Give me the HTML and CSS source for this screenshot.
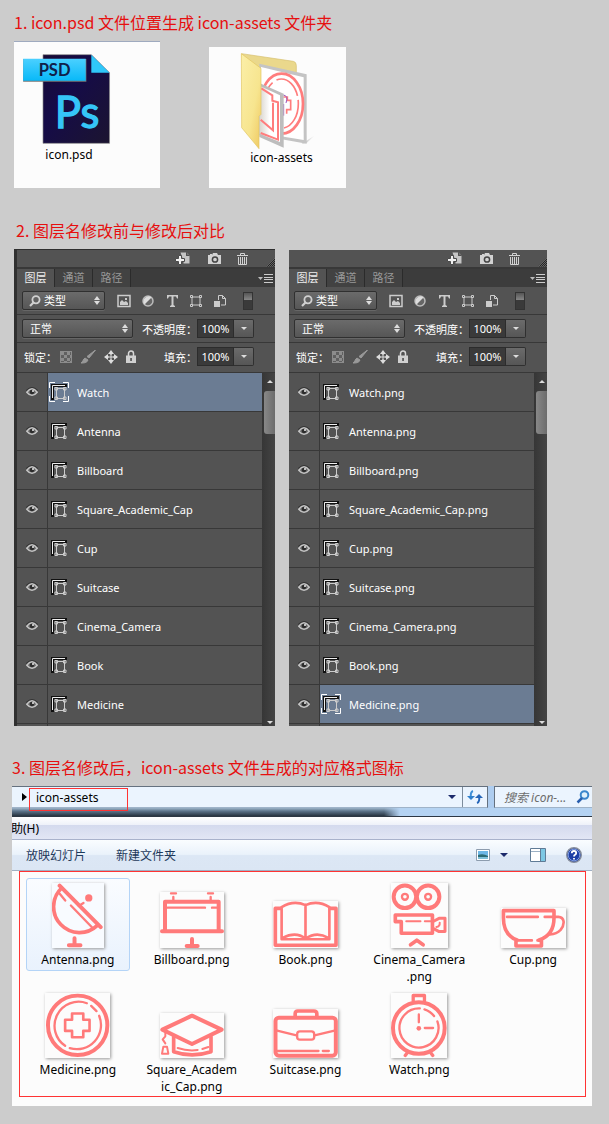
FILE: index.html
```html
<!DOCTYPE html>
<html lang="zh-CN">
<head>
<meta charset="utf-8">
<meta name="viewport" content="width=device-width, initial-scale=1">
<title>icon-assets</title>
<link rel="stylesheet" href="styles.css">
</head>
<body>
<svg class="sprite" aria-hidden="true">
  <symbol id="i-new" viewBox="0 0 15 13"><path d="M5.500 .5h6l3 3V11.500h-6V9" fill="#c4c4c4"/><path d="M11 0v4h4z" fill="#555"/><path d="M12 .5l2.500 2.500H12zM3.500 3.500h3v3h3v3h-3v3h-3v-3h-3v-3h3z" fill="#eee" stroke="#4a4a4a"/></symbol>
  <symbol id="i-camera" viewBox="0 0 15 13"><path d="M1 3h2V2h2v1l1-2h4l1 2h3v9H1z" fill="#d2d2d2"/><circle cx="8" cy="7.500" r="2.600" fill="none" stroke="#444" stroke-width="1.500"/></symbol>
  <symbol id="i-trash" viewBox="0 0 13 13"><path d="M1 3.500h11M4.500 3V1.500h4V3M2.500 5v7.500h8V5M4.500 5v7M6.500 5v7M8.500 5v7" fill="none" stroke="#d2d2d2"/></symbol>
  <symbol id="i-menu" viewBox="0 0 15 9"><path d="M0 3h5L2.500 6z" fill="#bbb"/><path d="M6 .5h9M6 3.500h9M6 5.500h9M6 8.500h9" stroke="#ccc"/></symbol>
  <symbol id="i-updown" viewBox="0 0 6 9"><path d="M0 4l3-4 3 4zM0 5h6L3 9z" fill="#ddd"/></symbol>
  <symbol id="i-search" viewBox="0 0 12 12"><circle cx="7" cy="4.800" r="3.600" fill="none" stroke="#d0d0d0" stroke-width="1.800"/><path d="M4.500 7.500L1 11" stroke="#d0d0d0" stroke-width="2.200"/></symbol>
  <symbol id="i-image" viewBox="0 0 14 14"><path d="M1 1.500h12v11H1z" fill="none" stroke="#ccc" stroke-width="1.500"/><path d="M3 11V8l2-2 2 2 2-1 2 2v2zM8 4h2v2H8z" fill="#ccc"/></symbol>
  <symbol id="i-adjust" viewBox="0 0 14 14"><circle cx="7" cy="7" r="5" fill="#666" stroke="#bbb" stroke-width="1.500"/><path d="M10.500 3.500a5 5 0 0 0-7 7z" fill="#ddd"/></symbol>
  <symbol id="i-type" viewBox="0 0 14 14"><path d="M2 1h11v3.500h-1L11 2.500H8.500V11l1.500 1v1H5v-1l1.500-1V2.500H4L3 4.500H2z" fill="#ccc"/></symbol>
  <symbol id="i-shape" viewBox="0 0 14 14"><path d="M3 3h8v8H3zM1.500 1.500h2v2h-2zM10.500 1.500h2v2h-2zM1.500 10.500h2v2h-2zM10.500 10.500h2v2h-2z" fill="none" stroke="#ccc"/></symbol>
  <symbol id="i-smart" viewBox="0 0 14 14"><path d="M5.500 6V1.500h4l3 3V11H8M9.500 1.500v3h3" fill="none" stroke="#ccc"/><path d="M1 7h6v6H1z" fill="#ccc"/></symbol>
  <symbol id="i-checker" viewBox="0 0 12 12"><path d="M0 0h12v12H0z" fill="#8c8c8c"/><path d="M4 1h3v3H4zM1 4h3v3H1zM7 4h3v3H7zM4 7h3v3H4zM10 1h1v3h-1zM10 7h1v3h-1zM1 10h3v1H1zM7 10h3v1H7z" fill="#606060"/></symbol>
  <symbol id="i-brush" viewBox="0 0 16 14"><path d="M15.500 0L9 8 7 6.500zM1 13c2-1 2-4 4-5l3 2c-1 3-4 3-7 3z" fill="#999" stroke="#999"/></symbol>
  <symbol id="i-move" viewBox="0 0 14 14"><path d="M7 2v10M2 7h10" stroke="#ddd"/><path d="M4 4L7 0l3 4zM4 10l3 4 3-4zM4 4L0 7l4 3zM10 4l4 3-4 3z" fill="#ddd"/><path d="M5 5h4v4H5z" fill="#555"/><path d="M7 4v6M4 7h6" stroke="#ddd"/></symbol>
  <symbol id="i-lock" viewBox="0 0 10 13"><path d="M2.500 6V3.500a2.500 2.500 0 0 1 5 0V6" fill="none" stroke="#d8d8d8" stroke-width="1.500"/><path d="M0 5.500h10V13H0z" fill="#d0d0d0"/><path d="M4.300 8h1.500v3H4.300z" fill="#444"/></symbol>
  <symbol id="i-eye" viewBox="0 0 12 10"><path d="M0 3.500Q6-2.500 12 3.500" fill="none" stroke="#333"/><path d="M.8 5.200Q6-1.500 11.200 5.200 6 11.500.8 5.200z" fill="#666" stroke="#c4c4c4" stroke-width="1.500"/><circle cx="6" cy="5" r="2.200" fill="#2c2c2c"/><circle cx="7" cy="4" r="1" fill="#eee"/></symbol>
  <symbol id="i-layer" viewBox="0 0 20 20"><path d="M2 18V2h16v3H5v13z" fill="#111"/><path d="M3.500 16V3.500H16" fill="none" stroke="#eee"/><path d="M7.500 6.500h8v10h-8zM6 5.500h2.500V8H6zM14.500 5.500H17V8h-2.500zM6 15h2.500v2.500H6zM14.500 15H17v2.500h-2.500z" fill="none" stroke="#ccc"/></symbol>
  <symbol id="i-frame" viewBox="0 0 20 20"><path d="M.5 6V.5H6M14 .5h5.500V6M.5 14v5.500H6M14 19.500h5.500V14" fill="none" stroke="#fff"/></symbol>
</svg>

<main class="page">
  <section class="step">
    <h2 class="step-title">1. icon.psd 文件位置生成 icon-assets 文件夹</h2>
    <div class="cards">
      <figure class="card card-psd">
        <svg class="psd-icon" viewBox="66 155 268 278" role="img" aria-label="PSD">
          <defs>
            <linearGradient id="tag" x2="0" y2="1"><stop stop-color="#4bd0ff"/><stop offset="1" stop-color="#08b9f8"/></linearGradient>
            <linearGradient id="doc" x2="1" y2="1"><stop stop-color="#180b35"/><stop offset=".4" stop-color="#150b48"/><stop offset="1" stop-color="#1c1530"/></linearGradient>
          </defs>
          <path d="M129 160H275L330 215V428H129z" fill="url(#doc)" stroke="#888" stroke-width="2"/>
          <path d="M275 160L330 215H275z" fill="#2fc7fa"/>
          <path d="M69 173H260V242H69z" fill="#777"/>
          <path d="M69 172H258V239H69z" fill="url(#tag)"/>
          <text x="164" y="225" class="psd-tag">PSD</text>
          <text x="232" y="382" class="psd-mark">Ps</text>
        </svg>
        <figcaption>icon.psd</figcaption>
      </figure>
      <figure class="card card-folder">
        <svg class="folder-icon" viewBox="720 155 231 294" role="img" aria-label="icon-assets">
          <defs>
            <linearGradient id="fold" x2="1" y2="1"><stop stop-color="#fbefa8"/><stop offset=".6" stop-color="#f7e58f"/><stop offset="1" stop-color="#efc860"/></linearGradient>
            <linearGradient id="paper"><stop stop-color="#d8d4cc"/><stop offset=".5" stop-color="#fff"/></linearGradient>
            <linearGradient id="shade"><stop stop-color="#bbb"/><stop offset="1" stop-color="#fcfcfc"/></linearGradient>
          </defs>
          <path d="M905 430L945 405 920 428z" fill="url(#shade)"/>
          <path d="M725 160L880 183Q889 185 889 196V330H740z" fill="#ead88c" stroke="#d6c070" stroke-width="2"/>
          <path d="M778 190L920 222V430L778 405z" fill="#c4c4c4"/>
          <path d="M783 200L911 231V419L783 398z" fill="#fff"/>
          <g fill="none" stroke="#ff7d7d">
            <ellipse cx="845" cy="310" rx="64" ry="90" stroke-width="8"/>
            <ellipse cx="844" cy="310" rx="51" ry="74" stroke-width="5" stroke-dasharray="90 12 24 14"/>
            <path d="M850 290h12v10h10v28h-12v12" stroke-width="5"/>
          </g>
          <path d="M850 284q16 2 8 24M851 346v-35" stroke="#9b55c0" stroke-width="3" fill="none"/>
          <path d="M778 248L851 280V442L778 410z" fill="#bdbdbd"/>
          <path d="M778 256L840 285V425L778 400z" fill="url(#paper)"/>
          <path d="M784 264l33 21v16l17 5v112l-52-20M782 358l37 32V307" fill="none" stroke="#ff7d7d" stroke-width="6"/>
          <path d="M724 160L783 204V342L777 348V445L725 382z" fill="url(#fold)" stroke="#e3c660" stroke-width="2"/>
        </svg>
        <figcaption>icon-assets</figcaption>
      </figure>
    </div>
  </section>

  <section class="step">
    <h2 class="step-title title-two">2. 图层名修改前与修改后对比</h2>
    <div class="panels">
      <div class="panel panel-before">
        <div class="panel-top">
          <button class="bare" aria-label="新建"><svg width="15" height="13"><use href="#i-new"/></svg></button>
          <button class="bare" aria-label="快照"><svg width="15" height="13"><use href="#i-camera"/></svg></button>
          <button class="bare" aria-label="删除"><svg width="13" height="13"><use href="#i-trash"/></svg></button>
          <span class="grip"></span>
        </div>
        <div class="tabs">
          <button class="tab active">图层</button><button class="tab">通道</button><button class="tab">路径</button>
          <button class="bare tabs-menu" aria-label="菜单"><svg width="15" height="9"><use href="#i-menu"/></svg></button>
        </div>
        <div class="row">
          <label class="picker picker-kind"><svg class="lens" width="12" height="12"><use href="#i-search"/></svg><select aria-label="类型"><option>类型</option></select><svg class="updown" width="6" height="9"><use href="#i-updown"/></svg></label>
          <div class="filters">
            <button class="bare" aria-label="像素"><svg width="14" height="14"><use href="#i-image"/></svg></button>
            <button class="bare" aria-label="调整"><svg width="14" height="14"><use href="#i-adjust"/></svg></button>
            <button class="bare" aria-label="文字"><svg width="14" height="14"><use href="#i-type"/></svg></button>
            <button class="bare" aria-label="形状"><svg width="14" height="14"><use href="#i-shape"/></svg></button>
            <button class="bare" aria-label="智能对象"><svg width="14" height="14"><use href="#i-smart"/></svg></button>
          </div>
          <button class="switch" aria-label="过滤开关"></button>
        </div>
        <div class="row">
          <label class="picker picker-blend"><select aria-label="混合模式"><option>正常</option></select><svg class="updown" width="6" height="9"><use href="#i-updown"/></svg></label>
          <label class="value-label" for="op1">不透明度：</label>
          <input class="value" id="op1" value="100%"><button class="drop" aria-label="不透明度选项"></button>
        </div>
        <div class="row row-lock">
          <span class="lock-label">锁定：</span>
          <div class="locks">
            <button class="bare" aria-label="透明像素"><svg width="12" height="12"><use href="#i-checker"/></svg></button>
            <button class="bare" aria-label="图像像素"><svg width="16" height="14"><use href="#i-brush"/></svg></button>
            <button class="bare" aria-label="位置"><svg width="14" height="14"><use href="#i-move"/></svg></button>
            <button class="bare" aria-label="全部"><svg width="10" height="13"><use href="#i-lock"/></svg></button>
          </div>
          <label class="value-label" for="fill1">填充：</label>
          <input class="value" id="fill1" value="100%"><button class="drop" aria-label="填充选项"></button>
        </div>
        <div class="layers">
          <ul class="layer-list">
            <li class="layer selected"><button class="eye" aria-label="可见"><svg width="12" height="10"><use href="#i-eye"/></svg></button><span class="layer-body"><svg width="20" height="20"><use href="#i-layer"/><use href="#i-frame"/></svg>Watch</span></li>
            <li class="layer"><button class="eye" aria-label="可见"><svg width="12" height="10"><use href="#i-eye"/></svg></button><span class="layer-body"><svg width="20" height="20"><use href="#i-layer"/></svg>Antenna</span></li>
            <li class="layer"><button class="eye" aria-label="可见"><svg width="12" height="10"><use href="#i-eye"/></svg></button><span class="layer-body"><svg width="20" height="20"><use href="#i-layer"/></svg>Billboard</span></li>
            <li class="layer"><button class="eye" aria-label="可见"><svg width="12" height="10"><use href="#i-eye"/></svg></button><span class="layer-body"><svg width="20" height="20"><use href="#i-layer"/></svg>Square_Academic_Cap</span></li>
            <li class="layer"><button class="eye" aria-label="可见"><svg width="12" height="10"><use href="#i-eye"/></svg></button><span class="layer-body"><svg width="20" height="20"><use href="#i-layer"/></svg>Cup</span></li>
            <li class="layer"><button class="eye" aria-label="可见"><svg width="12" height="10"><use href="#i-eye"/></svg></button><span class="layer-body"><svg width="20" height="20"><use href="#i-layer"/></svg>Suitcase</span></li>
            <li class="layer"><button class="eye" aria-label="可见"><svg width="12" height="10"><use href="#i-eye"/></svg></button><span class="layer-body"><svg width="20" height="20"><use href="#i-layer"/></svg>Cinema_Camera</span></li>
            <li class="layer"><button class="eye" aria-label="可见"><svg width="12" height="10"><use href="#i-eye"/></svg></button><span class="layer-body"><svg width="20" height="20"><use href="#i-layer"/></svg>Book</span></li>
            <li class="layer"><button class="eye" aria-label="可见"><svg width="12" height="10"><use href="#i-eye"/></svg></button><span class="layer-body"><svg width="20" height="20"><use href="#i-layer"/></svg>Medicine</span></li>
          </ul>
          <div class="scroll"><span class="arrow-up"></span><span class="thumb"></span><span class="arrow-down"></span></div>
        </div>
      </div>

      <div class="panel panel-after">
        <div class="panel-top">
          <button class="bare" aria-label="新建"><svg width="15" height="13"><use href="#i-new"/></svg></button>
          <button class="bare" aria-label="快照"><svg width="15" height="13"><use href="#i-camera"/></svg></button>
          <button class="bare" aria-label="删除"><svg width="13" height="13"><use href="#i-trash"/></svg></button>
          <span class="grip"></span>
        </div>
        <div class="tabs">
          <button class="tab active">图层</button><button class="tab">通道</button><button class="tab">路径</button>
          <button class="bare tabs-menu" aria-label="菜单"><svg width="15" height="9"><use href="#i-menu"/></svg></button>
        </div>
        <div class="row">
          <label class="picker picker-kind"><svg class="lens" width="12" height="12"><use href="#i-search"/></svg><select aria-label="类型"><option>类型</option></select><svg class="updown" width="6" height="9"><use href="#i-updown"/></svg></label>
          <div class="filters">
            <button class="bare" aria-label="像素"><svg width="14" height="14"><use href="#i-image"/></svg></button>
            <button class="bare" aria-label="调整"><svg width="14" height="14"><use href="#i-adjust"/></svg></button>
            <button class="bare" aria-label="文字"><svg width="14" height="14"><use href="#i-type"/></svg></button>
            <button class="bare" aria-label="形状"><svg width="14" height="14"><use href="#i-shape"/></svg></button>
            <button class="bare" aria-label="智能对象"><svg width="14" height="14"><use href="#i-smart"/></svg></button>
          </div>
          <button class="switch" aria-label="过滤开关"></button>
        </div>
        <div class="row">
          <label class="picker picker-blend"><select aria-label="混合模式"><option>正常</option></select><svg class="updown" width="6" height="9"><use href="#i-updown"/></svg></label>
          <label class="value-label" for="op2">不透明度：</label>
          <input class="value" id="op2" value="100%"><button class="drop" aria-label="不透明度选项"></button>
        </div>
        <div class="row row-lock">
          <span class="lock-label">锁定：</span>
          <div class="locks">
            <button class="bare" aria-label="透明像素"><svg width="12" height="12"><use href="#i-checker"/></svg></button>
            <button class="bare" aria-label="图像像素"><svg width="16" height="14"><use href="#i-brush"/></svg></button>
            <button class="bare" aria-label="位置"><svg width="14" height="14"><use href="#i-move"/></svg></button>
            <button class="bare" aria-label="全部"><svg width="10" height="13"><use href="#i-lock"/></svg></button>
          </div>
          <label class="value-label" for="fill2">填充：</label>
          <input class="value" id="fill2" value="100%"><button class="drop" aria-label="填充选项"></button>
        </div>
        <div class="layers">
          <ul class="layer-list">
            <li class="layer"><button class="eye" aria-label="可见"><svg width="12" height="10"><use href="#i-eye"/></svg></button><span class="layer-body"><svg width="20" height="20"><use href="#i-layer"/></svg>Watch.png</span></li>
            <li class="layer"><button class="eye" aria-label="可见"><svg width="12" height="10"><use href="#i-eye"/></svg></button><span class="layer-body"><svg width="20" height="20"><use href="#i-layer"/></svg>Antenna.png</span></li>
            <li class="layer"><button class="eye" aria-label="可见"><svg width="12" height="10"><use href="#i-eye"/></svg></button><span class="layer-body"><svg width="20" height="20"><use href="#i-layer"/></svg>Billboard.png</span></li>
            <li class="layer"><button class="eye" aria-label="可见"><svg width="12" height="10"><use href="#i-eye"/></svg></button><span class="layer-body"><svg width="20" height="20"><use href="#i-layer"/></svg>Square_Academic_Cap.png</span></li>
            <li class="layer"><button class="eye" aria-label="可见"><svg width="12" height="10"><use href="#i-eye"/></svg></button><span class="layer-body"><svg width="20" height="20"><use href="#i-layer"/></svg>Cup.png</span></li>
            <li class="layer"><button class="eye" aria-label="可见"><svg width="12" height="10"><use href="#i-eye"/></svg></button><span class="layer-body"><svg width="20" height="20"><use href="#i-layer"/></svg>Suitcase.png</span></li>
            <li class="layer"><button class="eye" aria-label="可见"><svg width="12" height="10"><use href="#i-eye"/></svg></button><span class="layer-body"><svg width="20" height="20"><use href="#i-layer"/></svg>Cinema_Camera.png</span></li>
            <li class="layer"><button class="eye" aria-label="可见"><svg width="12" height="10"><use href="#i-eye"/></svg></button><span class="layer-body"><svg width="20" height="20"><use href="#i-layer"/></svg>Book.png</span></li>
            <li class="layer selected"><button class="eye" aria-label="可见"><svg width="12" height="10"><use href="#i-eye"/></svg></button><span class="layer-body"><svg width="20" height="20"><use href="#i-layer"/><use href="#i-frame"/></svg>Medicine.png</span></li>
          </ul>
          <div class="scroll"><span class="arrow-up"></span><span class="thumb"></span><span class="arrow-down"></span></div>
        </div>
      </div>
    </div>
  </section>

  <section class="step">
    <h2 class="step-title title-three">3. 图层名修改后，icon-assets 文件生成的对应格式图标</h2>
    <div class="explorer">
      <div class="location">
        <div class="address">
          <span class="crumb-arrow"></span>
          <button class="crumb">icon-assets</button>
          <button class="bare history" aria-label="历史"><span class="caret"></span></button>
          <button class="refresh" aria-label="刷新"><svg width="16" height="14" viewBox="0 0 16 14"><path d="M6 1Q3 2 4 8" fill="none" stroke="#3e8fd6" stroke-width="2"/><path d="M0 6h8L4 10z" fill="#2f7fcc"/><path d="M10 13Q13 12 12 6" fill="none" stroke="#2565b8" stroke-width="2"/><path d="M8 8h8l-4-4z" fill="#2565b8"/></svg></button>
        </div>
        <label class="search"><input type="text" aria-label="搜索" placeholder="搜索 icon-..."><svg width="14" height="14" viewBox="0 0 14 14"><circle cx="8.500" cy="5" r="3.800" fill="#dff0fb" stroke="#3a86cc" stroke-width="2"/><path d="M6 8L1.500 12.500" stroke="#2a5fae" stroke-width="2.500"/></svg></label>
      </div>
      <div class="glass"></div>
      <div class="menubar"><button class="bare menu-item">助(H)</button></div>
      <div class="toolbar">
        <button class="bare">放映幻灯片</button>
        <button class="bare">新建文件夹</button>
        <span class="tools">
          <button class="bare" aria-label="视图"><svg width="14" height="12" viewBox="0 0 14 12"><path d="M.5.5h13v11H.5z" fill="#fff" stroke="#8d9cae"/><path d="M2 2h10v8H2z" fill="#6db7e6"/><path d="M2 6q5-2 10 1v3H2z" fill="#2c6b74"/><path d="M2 8h10v2H2z" fill="#7fc0d8"/></svg></button>
          <button class="bare" aria-label="更多视图"><span class="caret"></span></button>
          <button class="bare pane" aria-label="预览窗格"><svg width="16" height="14" viewBox="0 0 16 14"><path d="M.5.5h15v13H.5z" fill="#fff" stroke="#5f7b96"/><path d="M1 3.500h9" stroke="#9bb0c4"/><path d="M10 1h5v12h-5z" fill="#7cc7e4"/><path d="M10.500 1v12" stroke="#5f7b96"/></svg></button>
          <button class="bare" aria-label="帮助"><svg width="16" height="16" viewBox="0 0 16 16"><circle cx="8" cy="8" r="7.300" fill="#1d3fa6" stroke="#878e9c" stroke-width="1.400"/><circle cx="8" cy="8" r="5.800" fill="none" stroke="#7d9be0"/><path d="M5.800 6.200Q5.800 4 8 4t2.200 2Q10.200 7 9 7.800 8 8.400 8 9.600M8 11v1.500" fill="none" stroke="#fff" stroke-width="1.800"/></svg></button>
        </span>
      </div>
      <div class="content">
        <div class="files">
          <figure class="file chosen"><div class="slot"><svg class="pic" width="52" height="65" viewBox="123 38 157 194">
            <path d="M146 45L270 170M191 204V224M174 225H209" stroke-width="12"/><path d="M152 52A77 77 0 0 0 260 165" stroke-width="11"/><path d="M145 68L163 90M180 105L245 172M204 106L218 97" stroke-width="7"/><circle class="dot" cx="234" cy="82" r="11"/></svg></div><figcaption>Antenna.png</figcaption></figure>
          <figure class="file"><div class="slot"><svg class="pic" width="64" height="56" viewBox="447 63 192 168">
            <path d="M462 180V92H623V180M453 181H633M543 204V224M527 225H560" stroke-width="12"/><path d="M470 110H582M603 110H620M487 78V90M599 78V90M480 67H495M591 67H606" stroke-width="7"/></svg></div><figcaption>Billboard.png</figcaption></figure>
          <figure class="file"><div class="slot"><svg class="pic" width="65" height="47" viewBox="66 90 196 141">
            <path d="M88 112H73V223H256V112H238" stroke-width="11"/><path d="M92 108V205H236V108Q200 86 164 102 128 86 92 108M164 102V200M95 201Q135 180 164 203 198 180 233 201" stroke-width="8"/></svg></div><figcaption>Book.png</figcaption></figure>
          <figure class="file"><div class="slot"><svg class="pic" width="57" height="65" viewBox="420 36 172 195">
            <circle cx="462" cy="77" r="34" stroke-width="12"/><circle cx="532" cy="77" r="34" stroke-width="12"/><circle cx="462" cy="77" r="9" stroke-width="7"/><circle cx="532" cy="77" r="9" stroke-width="7"/><path d="M433 132H545V187H451V152H433zM479 222L498 208 517 222" stroke-width="11"/><path d="M550 150L565 142H583V182H565L550 174" stroke-width="9"/><path d="M466 151H509M522 151H540M557 168Q568 167 567 155" stroke-width="6"/></svg></div><figcaption>Cinema_Camera<br>.png</figcaption></figure>
          <figure class="file"><div class="slot"><svg class="pic" width="65" height="40" viewBox="93 110 194 121">
            <path d="M140 207C112 196 99 175 99 140V118H252V140C252 175 239 196 207 207M137 207V225H214V207" stroke-width="11"/><path d="M110 137H203M224 137H265C284 138 286 158 272 176Q260 188 240 190M140 208H185M202 208H212" stroke-width="8"/></svg></div><figcaption>Cup.png</figcaption></figure>
          <figure class="file"><div class="slot"><svg class="pic" width="65" height="65" viewBox="101 369 197 195">
            <circle cx="200" cy="466" r="90" stroke-width="12"/><path d="M228 399A73 73 0 0 0 162 528M265 437A73 73 0 0 1 176 535M241 407L257 423" stroke-width="7"/><path d="M183 430H217V449H236V483H217V502H183V483H162V449H183z" stroke-width="8"/></svg></div><figcaption>Medicine.png</figcaption></figure>
          <figure class="file"><div class="slot"><svg class="pic" width="64" height="45" viewBox="447 429 192 135">
            <path d="M454 479L543 437 632 479 543 522z" stroke-width="12"/><path d="M488 500V545Q543 564 600 545V500" stroke-width="11"/><path d="M500 534Q530 544 560 540M574 537L592 531M463 488V499L455 508 463 520M457 530H468L472 551H453z" stroke-width="6"/></svg></div><figcaption>Square_Academ<br>ic_Cap.png</figcaption></figure>
          <figure class="file"><div class="slot"><svg class="pic" width="65" height="49" viewBox="68 417 194 147">
            <rect x="75" y="443" width="181" height="114" rx="10" stroke-width="12"/><path d="M134 440V431Q134 423 142 423H190Q199 423 199 431V440" stroke-width="11"/><path d="M80 482L138 496M192 496L252 482M80 543H204M217 543H235" stroke-width="7"/><rect x="140" y="484" width="51" height="25" rx="8" stroke-width="7"/></svg></div><figcaption>Suitcase.png</figcaption></figure>
          <figure class="file"><div class="slot"><svg class="pic" width="56" height="65" viewBox="423 369 169 195">
            <circle cx="507" cy="474" r="78" stroke-width="12"/><path d="M490 392V376H524V392M471 550L466 557M544 550L549 557" stroke-width="10"/><path d="M510 415A59 59 0 1 0 563 454M524 418A59 59 0 0 1 553 438M507 433V457M525 474H550" stroke-width="7"/><circle class="dot" cx="507" cy="475" r="7"/></svg></div><figcaption>Watch.png</figcaption></figure>
        </div>
      </div>
    </div>
  </section>
</main>
</body>
</html>
```
FILE: styles.css
```css
* { box-sizing: border-box; }

body {
  margin: 0;
  background: #ccc;
  color: #000;
  font-family: "Noto Sans", "Noto Sans CJK SC", sans-serif;
  font-size: 12px;
}

button, input, select { font: inherit; color: inherit; }
svg { display: block; flex: none; }
figure, ul { margin: 0; padding: 0; }
.sprite { position: absolute; width: 0; height: 0; }

.bare {
  display: flex;
  padding: 0;
  border: 0;
  background: none;
}

.page { padding: 10px 17px 18px 12px; }

.step-title {
  margin: 0 0 0 2px;
  color: #e60f0f;
  font-family: "Noto Sans CJK SC", sans-serif;
  font-size: 16px;
  font-weight: 400;
  line-height: 24px;
}

/* File cards */
.cards {
  display: flex;
  align-items: flex-end;
  gap: 49px;
  margin: 7px 2px 0;
}
.card {
  display: flex;
  flex-direction: column;
  background: #fcfcfc;
  text-align: center;
  line-height: 16px;
}
.card-psd {
  width: 146px;
  border-top: 1px solid #9faabf;
  padding: 11px 8px 25px;
}
.card-psd figcaption { width: 94px; margin-top: 2px; }
.card-folder {
  width: 137px;
  padding: 5px 0 22px;
}
.card-folder figcaption { margin-left: 8px; }
.psd-icon { width: 89px; height: 92px; }
.folder-icon { width: 77px; height: 98px; margin-left: 31px; }
.psd-tag, .psd-mark { font-family: Lato, sans-serif; text-anchor: middle; }
.psd-tag { font-size: 50px; font-weight: 700; fill: #10204a; }
.psd-mark {
  font-size: 132px;
  font-weight: 400;
  fill: #35c5f8;
  stroke: #35c5f8;
  stroke-width: 4px;
}

/* Layer panels */
.title-two { margin: 30px 0 0 4px; }
.panels {
  display: flex;
  align-items: flex-end;
  gap: 14px;
  margin: 7px 2px 0;
}
.panel {
  width: 258px;
  background: #535353;
  color: #fff;
  font-size: 11px;
}
.panel-before {
  width: 261px;
  border-top: 1px solid #2e2e2e;
  border-left: 3px solid #303030;
}
.panel-top {
  display: flex;
  align-items: center;
  height: 19px;
  padding-left: 158px;
  gap: 17px;
  border-bottom: 2px solid #383838;
}
.panel-top .bare:nth-child(3) { margin-left: -3px; }
.grip {
  width: 9px;
  height: 9px;
  margin: 7px 0 0 auto;
  background: repeating-conic-gradient(#222 0 25%, #666 0 50%) 0 0 / 2px 2px;
  clip-path: polygon(100% 0, 100% 100%, 0 100%);
}
.tabs {
  display: flex;
  align-items: center;
  height: 18px;
  background: #3c3c3c;
}
.tab {
  width: 38px;
  height: 18px;
  padding: 0;
  border: 0;
  border-right: 1px solid #2b2b2b;
  background: #424242;
  color: #999;
  line-height: 18px;
}
.tab.active { background: #535353; color: #eee; }
.tabs-menu { margin: 0 2px 0 auto; }

.row {
  display: flex;
  align-items: center;
  height: 28px;
  padding-left: 5px;
  border-bottom: 1px solid #383838;
}
.row-lock { height: 30px; padding-bottom: 2px; }
.picker {
  display: flex;
  align-items: center;
  height: 19px;
  padding: 0 4px 0 7px;
  border: 1px solid #303030;
  border-radius: 2px;
  background: linear-gradient(#6b6b6b, #565656);
  box-shadow: 0 1px #666;
}
.picker select {
  flex: 1;
  min-width: 0;
  padding: 0;
  border: 0;
  appearance: none;
  background: none;
  outline: 0;
}
.picker-kind { width: 83px; gap: 3px; padding-left: 6px; }
.picker-blend { width: 111px; }
.filters { display: flex; gap: 10px; margin-left: 12px; }
.switch {
  width: 10px;
  height: 18px;
  margin-left: 16px;
  padding: 0;
  border: 1px solid #333;
  background: linear-gradient(#555, #888 45%, #3a3a3a 45%);
}
.value-label { margin-left: auto; white-space: nowrap; }
.value {
  width: 37px;
  height: 19px;
  padding: 0;
  border: 1px solid #2c2c2c;
  background: #3a3a3a;
  text-align: center;
}
.drop {
  display: grid;
  place-items: center;
  width: 20px;
  height: 19px;
  margin-right: 21px;
  padding: 0;
  border: 1px solid #303030;
  border-left: 0;
  border-radius: 0 2px 2px 0;
  background: linear-gradient(#6b6b6b, #565656);
}
.drop::before {
  content: "";
  border: 3px solid transparent;
  border-top-color: #ddd;
  border-bottom: 0;
}
.lock-label { margin-left: 2px; width: 36px; white-space: nowrap; }
.locks { display: flex; align-items: center; gap: 8px; }

.layers { display: flex; }
.layer-list {
  flex: 1;
  min-width: 0;
  padding-bottom: 2px;
  list-style: none;
  background: linear-gradient(to right, #535353 30px, #383838 30px, #383838 31px, #535353 31px);
}
.layer {
  display: flex;
  height: 39px;
  border-bottom: 1px solid #383838;
}
.eye {
  display: grid;
  place-items: center;
  width: 31px;
  padding: 0;
  border: 0;
  border-right: 1px solid #383838;
  background: none;
}
.layer-body {
  display: flex;
  flex: 1;
  align-items: center;
  gap: 8px;
  padding-left: 1px;
}
.selected .layer-body { background: #6b7c93; }
.scroll {
  display: flex;
  flex-direction: column;
  align-items: flex-end;
  width: 13px;
  padding: 7px 0 2px;
  background: linear-gradient(to right, #363636, #444);
}
.arrow-up, .arrow-down {
  margin-right: 2px;
  border: 3px solid transparent;
}
.arrow-up { border-bottom-color: #ddd; border-top: 0; }
.arrow-down { border-top-color: #ddd; border-bottom: 0; margin-top: auto; }
.thumb {
  width: 11px;
  height: 43px;
  margin-top: 8px;
  border-radius: 3px 0 0 3px;
  background: linear-gradient(to right, #888, #6c6c6c);
}

/* Explorer window */
.title-three { margin: 29px 0 0; }
.explorer {
  margin-top: 7px;
  background: #fcfcfc;
  line-height: 17px;
}
.location {
  display: flex;
  gap: 6px;
  height: 22px;
  background: #aecdf0;
}
.address, .search {
  display: flex;
  align-items: center;
  border: 1px solid #65717f;
  border-bottom-color: #9fb3c8;
  background: #ebf4fe;
}
.address {
  flex: 1;
  border-left: 0;
}
.crumb-arrow {
  margin-left: 10px;
  border: 4px solid transparent;
  border-left: 5px solid #000;
  border-right: 0;
}
.crumb {
  align-self: flex-start;
  z-index: 1;
  flex: none;
  width: 99px;
  height: 23px;
  margin: 1px auto 0 2px;
  padding: 0 0 4px 6px;
  border: 1px solid #ff3333;
  background: none;
  text-align: left;
}
.history { margin-right: 6px; }
.caret {
  border: 4px solid transparent;
  border-top: 4px solid #1c2a6b;
  border-bottom: 0;
}
.refresh {
  display: grid;
  place-items: center;
  align-self: stretch;
  width: 25px;
  padding: 0;
  border: 0;
  border-left: 1px solid #7d8c9c;
  background: none;
}
.search {
  width: 98px;
  padding: 0 2px 0 9px;
  border-right: 0;
}
.search input {
  flex: 1;
  min-width: 0;
  padding: 0;
  border: 0;
  outline: 0;
  background: none;
  font-style: italic;
}
.search input::placeholder { color: #6d6d6d; opacity: 1; }
.glass {
  height: 9px;
  border-bottom: 1px solid #2d3743;
  background: linear-gradient(to right, #b5d3f200 372px, #b5d3f2 388px), linear-gradient(#9db4c9, #5c7389 40%, #27333f);
}
.menubar {
  display: flex;
  align-items: center;
  height: 23px;
  overflow: hidden;
  border-bottom: 1px solid #a9b2cc;
  background: linear-gradient(#fff, #eef1f9 36%, #d4daee 37%, #e2e6f5);
}
.menu-item { margin-left: -1px; }
.toolbar {
  display: flex;
  align-items: center;
  gap: 30px;
  height: 31px;
  padding: 0 10px 0 14px;
  border-bottom: 1px solid #a0afc3;
  background: linear-gradient(#fafdff, #eaf2fb 48%, #dce7f5 52%, #dbe6f4);
  color: #1e395b;
}
.tools {
  display: flex;
  align-items: center;
  gap: 10px;
  margin-left: auto;
}
.pane { margin: 0 10px 0 12px; }
.content { padding: 0 6px 9px 7px; }
.files {
  display: grid;
  grid-template-columns: repeat(5, minmax(0, 1fr));
  align-items: start;
  gap: 2px 10px;
  padding: 6px 0 0 6px;
  border: 1px solid #ff3333;
}
.file {
  padding: 3px 0 0;
  border: 1px solid transparent;
  border-radius: 3px;
  text-align: center;
}
.file.chosen {
  padding-bottom: 2px;
  border-color: #b4d4f7;
  background: linear-gradient(#fafcff, #e9f2fd);
}
.slot {
  display: flex;
  align-items: flex-end;
  justify-content: center;
  height: 66px;
  margin-bottom: 3px;
}
.pic {
  background: #fcfcfc;
  box-shadow: 1px 1px 3px #999;
  fill: none;
  stroke: #ff7a7a;
  stroke-linecap: round;
  stroke-linejoin: round;
}
.chosen .pic { background: #f8fbff; }
.dot { fill: #ff7a7a; stroke: none; }
```
